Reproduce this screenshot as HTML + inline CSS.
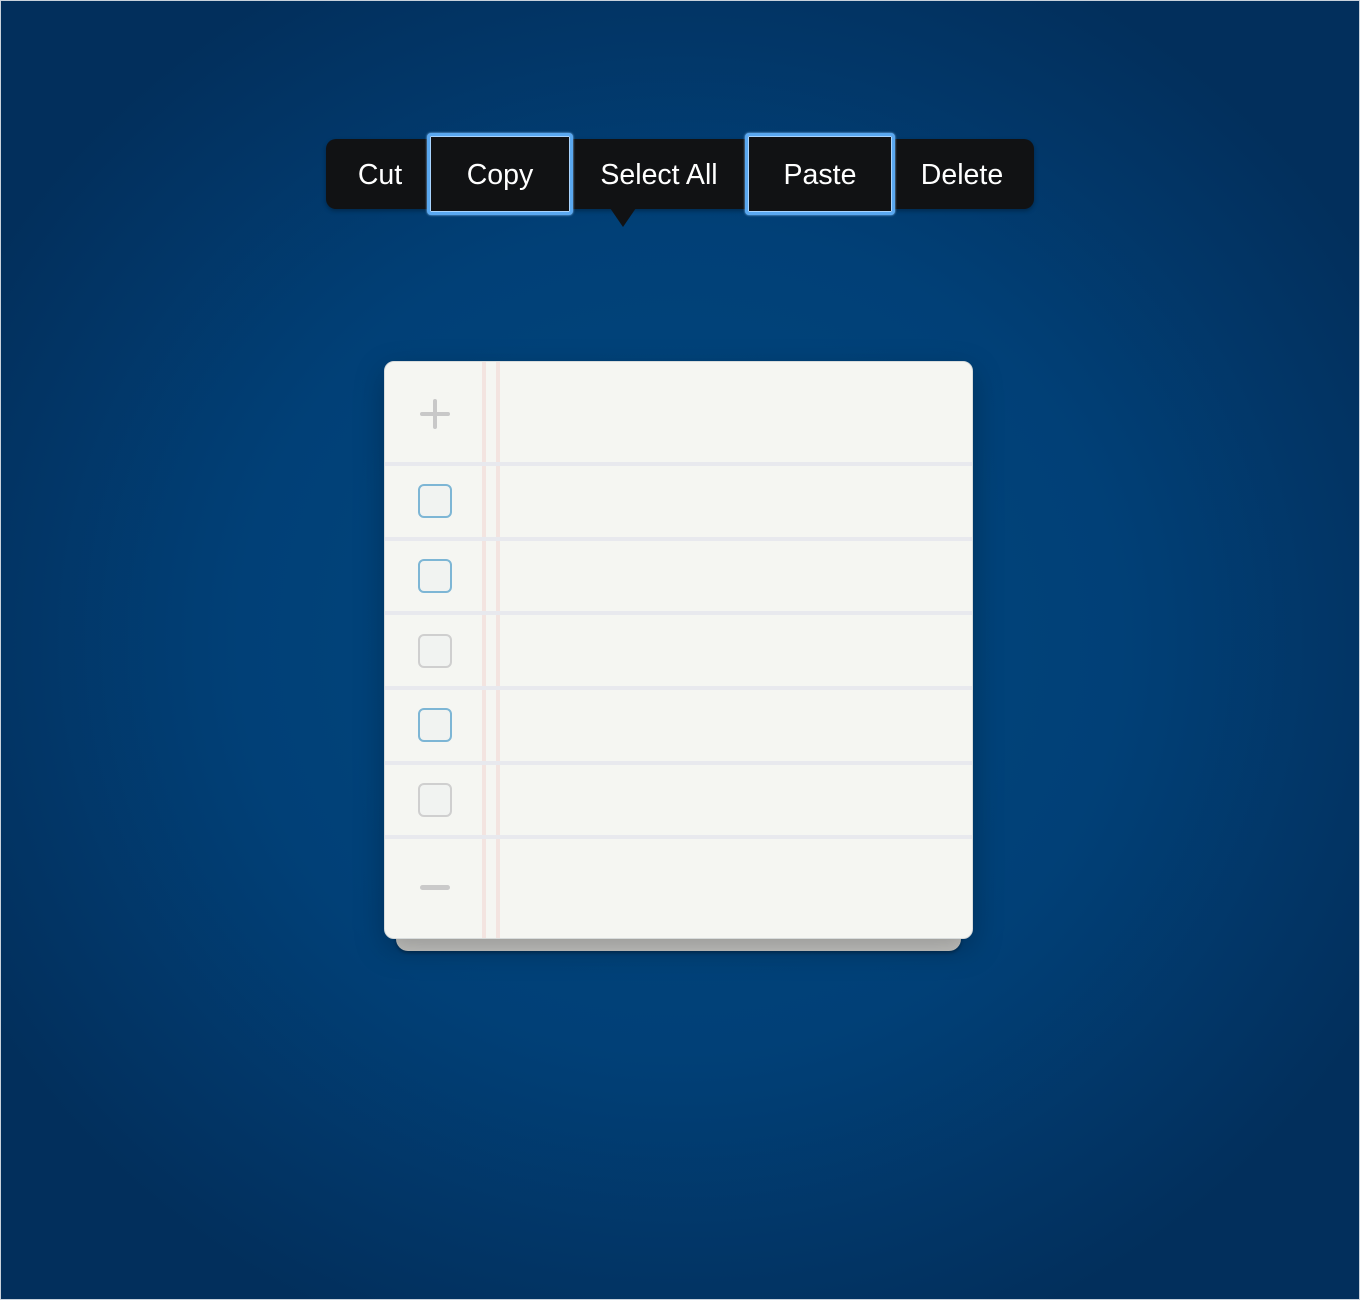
<!DOCTYPE html>
<html><head><style>
body{margin:0;width:1360px;height:1300px;overflow:hidden;background:radial-gradient(ellipse 800px 750px at 680px 640px,#01487f 0%,#014077 55%,#022f5c 100%);font-family:"Liberation Sans",sans-serif;position:relative}
.frame{position:absolute;left:0;top:0;width:1360px;height:1300px;box-sizing:border-box;border:1px solid #c9d2dc}
.menu{position:absolute;left:326px;top:139px;width:708px;height:70px;background:#111214;border-radius:10px;box-shadow:0 2px 4px rgba(0,0,0,.3)}
.arrow{position:absolute;left:610px;top:208px;width:0;height:0;border-left:13px solid transparent;border-right:13px solid transparent;border-top:19px solid #111214}
.it{position:absolute;top:139px;height:70px;line-height:72px;color:#fff;font-size:28.5px;text-align:center}
.hl{position:absolute;box-sizing:border-box;border:3px solid #5aa8f0;box-shadow:0 0 0 1px #a8d4ff inset,0 0 2px #8ec8ff;border-radius:4px;background:#111214}
.card{position:absolute;left:384px;top:361px;width:589px;height:578px;background:#f5f6f2;border-radius:10px;border:1px solid #d8dcdc;box-sizing:border-box;box-shadow:0 10px 30px rgba(0,0,0,.25);overflow:hidden}
.under{position:absolute;left:396px;top:920px;width:565px;height:31px;background:#c8c8c5;border-radius:0 0 12px 12px;box-shadow:0 2px 3px rgba(0,0,0,.3)}
.ln{position:absolute;left:0;right:0;height:4px;background:#e8e9ee}
.vl{position:absolute;top:0;bottom:0;width:4px;background:#f3e4e0}
.cb{position:absolute;left:33px;width:34px;height:34px;box-sizing:border-box;border:2px solid #7db6d5;border-radius:6px;background:#f1f3f1}
.cb.g{border-color:#cfcfcf}
</style></head><body>
<div class="menu"></div><div class="arrow"></div>
<div class="hl" style="left:427px;top:133px;width:146px;height:82px"></div>
<div class="hl" style="left:745px;top:133px;width:150px;height:82px"></div>
<div class="it" style="left:326px;width:108px">Cut</div>
<div class="it" style="left:427px;width:146px">Copy</div>
<div class="it" style="left:573px;width:172px">Select All</div>
<div class="it" style="left:745px;width:150px">Paste</div>
<div class="it" style="left:895px;width:134px">Delete</div>
<div class="under"></div>
<div class="card">
<div class="vl" style="left:97px"></div><div class="vl" style="left:111px"></div>
<div class="ln" style="top:100px"></div><div class="ln" style="top:175px"></div><div class="ln" style="top:249px"></div><div class="ln" style="top:324px"></div><div class="ln" style="top:399px"></div><div class="ln" style="top:473px"></div>
<div style="position:absolute;left:35px;top:50px;width:30px;height:4px;background:#c8c8c8;border-radius:2px"></div>
<div style="position:absolute;left:48px;top:37px;width:4px;height:30px;background:#c8c8c8;border-radius:2px"></div>
<div class="cb" style="top:122px"></div>
<div class="cb" style="top:197px"></div>
<div class="cb g" style="top:272px"></div>
<div class="cb" style="top:346px"></div>
<div class="cb g" style="top:421px"></div>
<div style="position:absolute;left:35px;top:523px;width:30px;height:5px;background:#cacaca;border-radius:3px"></div>
</div>
<div class="frame"></div>
</body></html>
